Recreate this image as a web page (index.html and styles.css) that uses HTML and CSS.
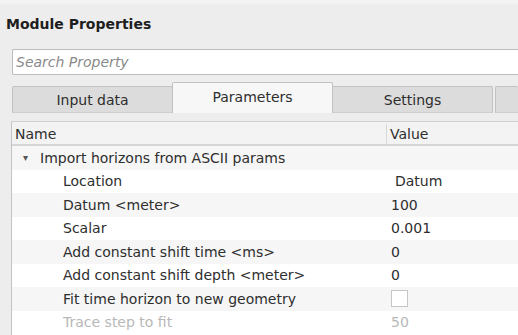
FILE: index.html
```html
<!DOCTYPE html>
<html>
<head>
<meta charset="utf-8">
<link rel="stylesheet" href="styles.css">
</head>
<body>
<div class="panel">
  <div class="title">Module Properties</div>
  <div class="search"><span class="placeholder">Search Property</span></div>
  <div class="tabs">
    <div class="tab">Input data</div>
    <div class="tab active">Parameters</div>
    <div class="tab">Settings</div>
    <div class="tab last"></div>
  </div>
  <div class="table">
    <div class="row head"><div class="c1 hname">Name</div><div class="c2">Value</div></div>
    <div class="row even"><div class="c1 group"><span class="arrow">▾</span>Import horizons from ASCII params</div><div class="c2"></div></div>
    <div class="row odd"><div class="c1 child">Location</div><div class="c2 combo">Datum</div></div>
    <div class="row even"><div class="c1 child">Datum &lt;meter&gt;</div><div class="c2">100</div></div>
    <div class="row odd"><div class="c1 child">Scalar</div><div class="c2">0.001</div></div>
    <div class="row even"><div class="c1 child">Add constant shift time &lt;ms&gt;</div><div class="c2">0</div></div>
    <div class="row odd"><div class="c1 child">Add constant shift depth &lt;meter&gt;</div><div class="c2">0</div></div>
    <div class="row even"><div class="c1 child">Fit time horizon to new geometry</div><div class="c2"><span class="check"></span></div></div>
    <div class="row odd disabled"><div class="c1 child">Trace step to fit</div><div class="c2">50</div></div>
  </div>
</div>
</body>
</html>
```
FILE: styles.css
```css
html, body {
  margin: 0;
  padding: 0;
  background: #ededed;
  overflow: hidden;
}
body {
  width: 518px;
  height: 335px;
  font-family: "DejaVu Sans", sans-serif;
  font-size: 14px;
  color: #2e2e2e;
}
.panel {
  width: 518px;
  height: 335px;
  overflow: hidden;
  display: flex;
  flex-direction: column;
  padding-top: 4px;
  box-sizing: border-box;
  background: linear-gradient(#f3f3f3 0 4px, #ededed 4px);
}
.title {
  font-weight: bold;
  font-size: 14px;
  color: #1e1e1e;
  padding-left: 6px;
  height: 40px;
  line-height: 40px;
}
.search {
  margin-left: 12px;
  margin-top: 5px;
  height: 24px;
  background: #fff;
  border: 1px solid #bcbcbc;
  border-right: none;
  border-radius: 2px 0 0 2px;
  display: flex;
  align-items: center;
}
.placeholder {
  font-style: italic;
  color: #8a8a8a;
  padding-left: 3px;
}
.tabs {
  display: flex;
  align-items: flex-end;
  margin-left: 12px;
  margin-top: 7px;
  height: 31px;
}
.tab {
  flex: 0 0 161px;
  height: 27px;
  box-sizing: border-box;
  background: #dcdcdc;
  border: 1px solid #c2c2c2;
  border-bottom: 1px solid #cfcfcf;
  border-radius: 2px 2px 0 0;
  display: flex;
  align-items: center;
  justify-content: center;
  color: #2e2e2e;
  margin-right: -1px;
}
.tab.active {
  height: 31px;
  padding-bottom: 2px;
  background: #f7f7f7;
  border-bottom: none;
  position: relative;
  z-index: 1;
}
.tab.last {
  flex: 1 0 0;
  margin-left: 3px;
  margin-right: 0;
  border-right: none;
}
.table {
  margin-left: 11px;
  margin-top: 8px;
  flex: 1;
  border-left: 1px solid #c4c4c4;
  border-top: 1px solid #cfcfcf;
  background: #fff;
}
.row {
  display: flex;
  height: 23.5px;
  align-items: center;
}
.row.even { background: #f6f6f6; }
.row.odd { background: #ffffff; }
.row.head {
  height: 22px;
  padding-top: 2px;
  box-sizing: content-box;
  height: 20px;
  background: #f3f3f3;
  border-bottom: 2px solid #d6d6d6;
}
.c1 {
  flex: 0 0 375px;
  box-sizing: border-box;
  white-space: nowrap;
}
.c2 {
  padding-left: 4px;
  white-space: nowrap;
}
.head .c1 {
  padding-left: 3px;
  height: 100%;
  display: flex;
  align-items: center;
  border-right: 1px solid #d8d8d8;
}
.head .c2 { padding-left: 3px; }
.group { padding-left: 11px; }
.arrow {
  display: inline-block;
  width: 17px;
  font-size: 10px;
  color: #555;
  vertical-align: 2px;
}
.child { padding-left: 51px; }
.c2.combo { padding-left: 8px; }
.check {
  display: block;
  width: 15px;
  height: 15px;
  border: 1px solid #c6c6c6;
  background: #fff;
}
.disabled { color: #b8b8b8; }
```
